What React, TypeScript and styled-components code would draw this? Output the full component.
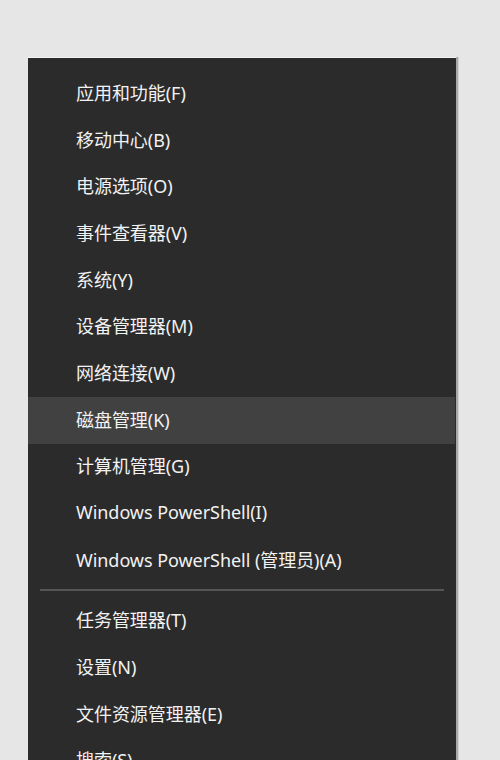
import React from "react";
import styled, { createGlobalStyle } from "styled-components";

const Global = createGlobalStyle`
  html, body { margin: 0; padding: 0; background: #e6e6e6; }
  body { font-family: "Segoe UI", "Noto Sans", "Noto Sans CJK SC", sans-serif; overflow: hidden; }
`;

const Page = styled.div`
  width: 500px;
  height: 760px;
  overflow: hidden;
  padding: 57px 0 0 28px;
  box-sizing: border-box;
`;

const Panel = styled.div`
  width: 428px;
  background: #2b2b2b;
  border-top: 1px solid #f4f4f4;
  box-shadow: 2px 0 0 #a8a8a8, 3px 0 0 #d0d0d0;
  padding: 12.5px 0 0;
`;

const Item = styled.div<{ $active?: boolean }>`
  box-sizing: border-box;
  height: 46.7px;
  display: flex;
  align-items: center;
  padding: 0 0 4px 48px;
  margin-right: 1px;
  background: ${(p) => (p.$active ? "#414141" : "transparent")};
  color: #f2f2f2;
  font-family: "Noto Sans", "Noto Sans CJK SC", sans-serif;
  font-size: 18px;
  letter-spacing: -0.05px;
  white-space: nowrap;
`;

const Separator = styled.div`
  height: 2px;
  background: #555555;
  margin: 5px 12px 7px 12px;
`;

const top = [
  "应用和功能(F)",
  "移动中心(B)",
  "电源选项(O)",
  "事件查看器(V)",
  "系统(Y)",
  "设备管理器(M)",
  "网络连接(W)",
  "磁盘管理(K)",
  "计算机管理(G)",
  "Windows PowerShell(I)",
  "Windows PowerShell (管理员)(A)",
];

const bottom = ["任务管理器(T)", "设置(N)", "文件资源管理器(E)", "搜索(S)", "运行(R)"];

export default function App() {
  return (
    <>
      <Global />
      <Page>
        <Panel>
          {top.map((t) => (
            <Item key={t} $active={t === "磁盘管理(K)"}>
              {t}
            </Item>
          ))}
          <Separator />
          {bottom.map((t) => (
            <Item key={t}>{t}</Item>
          ))}
        </Panel>
      </Page>
    </>
  );
}
